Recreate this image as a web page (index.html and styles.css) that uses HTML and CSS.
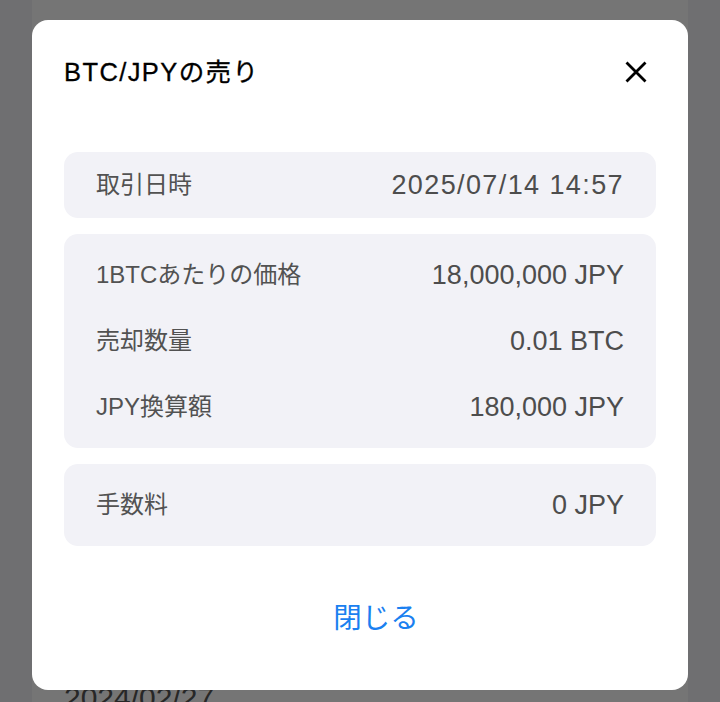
FILE: index.html
```html
<!DOCTYPE html>
<html lang="ja">
<head>
<meta charset="utf-8">
<title>BTC/JPYの売り</title>
<link rel="stylesheet" href="styles.css">
</head>
<body>
<div class="page">
  <main class="page-col">
    <h2 class="date-heading">2024/02/27</h2>
  </main>
</div>
<div class="overlay">
  <div class="modal" role="dialog">
    <header class="modal-header">
      <h1 class="modal-title">BTC/JPYの売り</h1>
      <button class="close-btn" aria-label="閉じる">
        <svg width="22" height="22" viewBox="0 0 22 22"><path d="M1.5 1.5L20.5 20.5M20.5 1.5L1.5 20.5" stroke="#000" stroke-width="2.8" fill="none"/></svg>
      </button>
    </header>
    <div class="modal-body">
      <section class="card card--single">
        <div class="row"><span class="label">取引日時</span><span class="value value--datetime">2025/07/14 14:57</span></div>
      </section>
      <section class="card">
        <div class="row"><span class="label">1BTCあたりの価格</span><span class="value">18,000,000 JPY</span></div>
        <div class="row"><span class="label">売却数量</span><span class="value">0.01 BTC</span></div>
        <div class="row"><span class="label">JPY換算額</span><span class="value">180,000 JPY</span></div>
      </section>
      <section class="card">
        <div class="row"><span class="label">手数料</span><span class="value">0 JPY</span></div>
      </section>
    </div>
    <footer class="modal-footer">
      <button class="text-btn">閉じる</button>
    </footer>
  </div>
</div>
</body>
</html>
```
FILE: styles.css
```css
html, body {
  margin: 0;
  height: 100%;
}
body {
  background: #f2f2f7;
  font-family: "Liberation Sans", "Noto Sans CJK JP", sans-serif;
  overflow: hidden;
}
.page {
  height: 100vh;
  padding: 0 32px;
  box-sizing: border-box;
}
.page-col {
  display: block;
  background: #fff;
  height: 100%;
  padding: 681px 32px 0;
  box-sizing: border-box;
}
.date-heading {
  margin: 0;
  font-size: 30px;
  line-height: 34px;
  font-weight: 400;
  color: #555;
}
.overlay {
  position: fixed;
  inset: 0;
  background: rgba(0, 0, 0, 0.54);
  display: flex;
  justify-content: center;
  align-items: flex-start;
  padding-top: 20px;
}
.modal {
  width: 656px;
  background: #fff;
  border-radius: 16px;
  box-sizing: border-box;
}
.modal-header {
  display: flex;
  align-items: center;
  justify-content: space-between;
  padding: 32px 32px 0;
}
.modal-title {
  margin: 0;
  font-size: 25.5px;
  font-weight: 400;
  line-height: 40px;
  color: #000;
  letter-spacing: 1.4px;
  -webkit-text-stroke: 0.3px #000;
}
.close-btn {
  width: 40px;
  height: 40px;
  border: 0;
  background: none;
  padding: 0;
  display: flex;
  align-items: center;
  justify-content: center;
}
.modal-body {
  padding: 60px 32px 0;
  display: flex;
  flex-direction: column;
  gap: 16px;
}
.card {
  background: #f2f2f7;
  border-radius: 14px;
  padding: 8px 0;
}
.card--single {
  padding: 0;
}
.row {
  display: flex;
  justify-content: space-between;
  align-items: center;
  height: 66px;
  padding: 0 32px;
}
.label {
  font-size: 24px;
  line-height: 30px;
  color: #525252;
}
.value {
  font-size: 27px;
  line-height: 30px;
  color: #4d4d4d;
}
.value--datetime {
  letter-spacing: 1.4px;
}
.modal-footer {
  padding: 40px 32px 40px 64px;
}
.text-btn {
  display: block;
  width: 100%;
  border: 0;
  background: none;
  padding: 0;
  font: inherit;
  font-size: 28.5px;
  line-height: 64px;
  color: #1a80f0;
  text-align: center;
}
```
